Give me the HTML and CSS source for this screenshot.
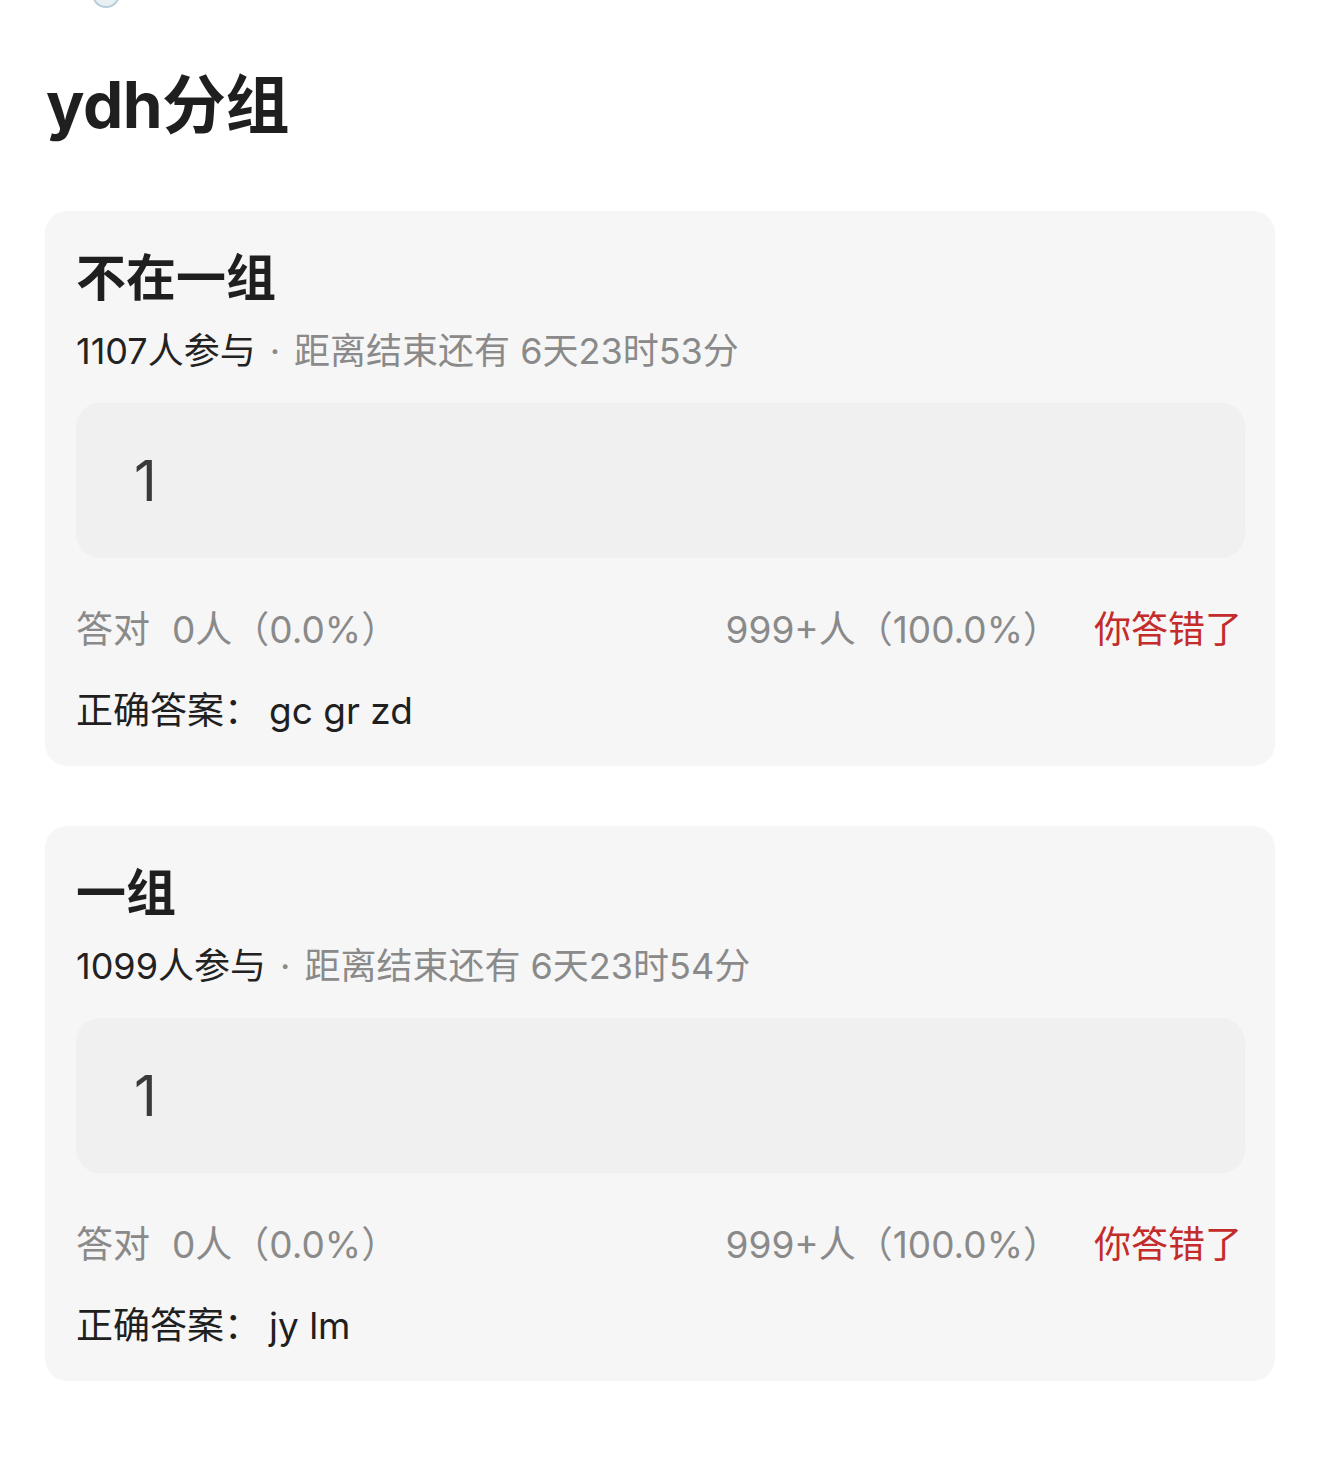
FILE: index.html
```html
<!DOCTYPE html>
<html lang="zh-CN">
<head>
  <meta charset="UTF-8" />
  <meta name="viewport" content="width=device-width, initial-scale=1.0"/>
  <title>ydh分组</title>
  <link rel="stylesheet" href="styles.css">
</head>
<body>
  <div class="page">
    <div class="top-avatar"></div>
    <h1 class="page-title">ydh分组</h1>

    <div class="vote-card">
      <h2 class="vote-title">不在一组</h2>
      <p class="vote-meta"><span class="count">1107人参与</span><span class="dot">·</span>距离结束还有 6天23时53分</p>
      <div class="option-box">1</div>
      <div class="stats">
        <span class="stat-left">答对<span class="num">0人（0.0%）</span></span>
        <span class="stat-right">999+人（100.0%）<span class="wrong">你答错了</span></span>
      </div>
      <p class="answer">正确答案：<span class="answer-text">gc gr zd</span></p>
    </div>

    <div class="vote-card">
      <h2 class="vote-title">一组</h2>
      <p class="vote-meta"><span class="count">1099人参与</span><span class="dot">·</span>距离结束还有 6天23时54分</p>
      <div class="option-box">1</div>
      <div class="stats">
        <span class="stat-left">答对<span class="num">0人（0.0%）</span></span>
        <span class="stat-right">999+人（100.0%）<span class="wrong">你答错了</span></span>
      </div>
      <p class="answer">正确答案：<span class="answer-text">jy lm</span></p>
    </div>
  </div>
</body>
</html>
```

FILE: styles.css
```css
body {
  margin: 0;
  background: #ffffff;
  font-family: "Inter", "Noto Sans CJK SC", sans-serif;
  color: #1f1f1f;
}
.page {
  padding: 0 45px 80px;
}
.top-avatar {
  width: 24px;
  height: 24px;
  margin: -20px 0 0 47px;
  border-radius: 50%;
  border: 2px solid #b9cdd9;
  background: #e9f0f4;
}
.page-title {
  margin: 57px 0 0 1px;
  font-size: 64px;
  line-height: 80px;
  font-weight: 700;
  letter-spacing: -0.5px;
}
.vote-card {
  margin-top: 66px;
  background: #f6f6f6;
  border-radius: 22px;
  padding: 37px 30px 30px 31px;
}
.vote-card + .vote-card {
  margin-top: 60px;
}
.vote-title {
  margin: 0;
  font-size: 50px;
  line-height: 60px;
  font-weight: 700;
}
.vote-meta {
  margin: 21px 0 0;
  font-size: 36px;
  line-height: 44px;
  color: #8a8a8a;
}
.vote-meta .count {
  color: #222;
}
.vote-meta .dot {
  margin: 0 14px;
}
.option-box {
  margin-top: 30px;
  height: 155px;
  display: flex;
  align-items: center;
  padding-left: 58px;
  background: #f0f0f0;
  border-radius: 24px;
  font-size: 56px;
  color: #3a3a3a;
}
.stats {
  margin-top: 47px;
  display: flex;
  justify-content: space-between;
  font-size: 37px;
  line-height: 50px;
  color: #8a8a8a;
  padding-right: 3px;
}
.stats .num {
  margin-left: 22px;
}
.stats .wrong {
  margin-left: 34px;
  color: #c42b2b;
}
.answer {
  margin: 31px 0 0;
  font-size: 37px;
  line-height: 50px;
  color: #1f1f1f;
}
.answer-text {
  margin-left: 8px;
}
```
